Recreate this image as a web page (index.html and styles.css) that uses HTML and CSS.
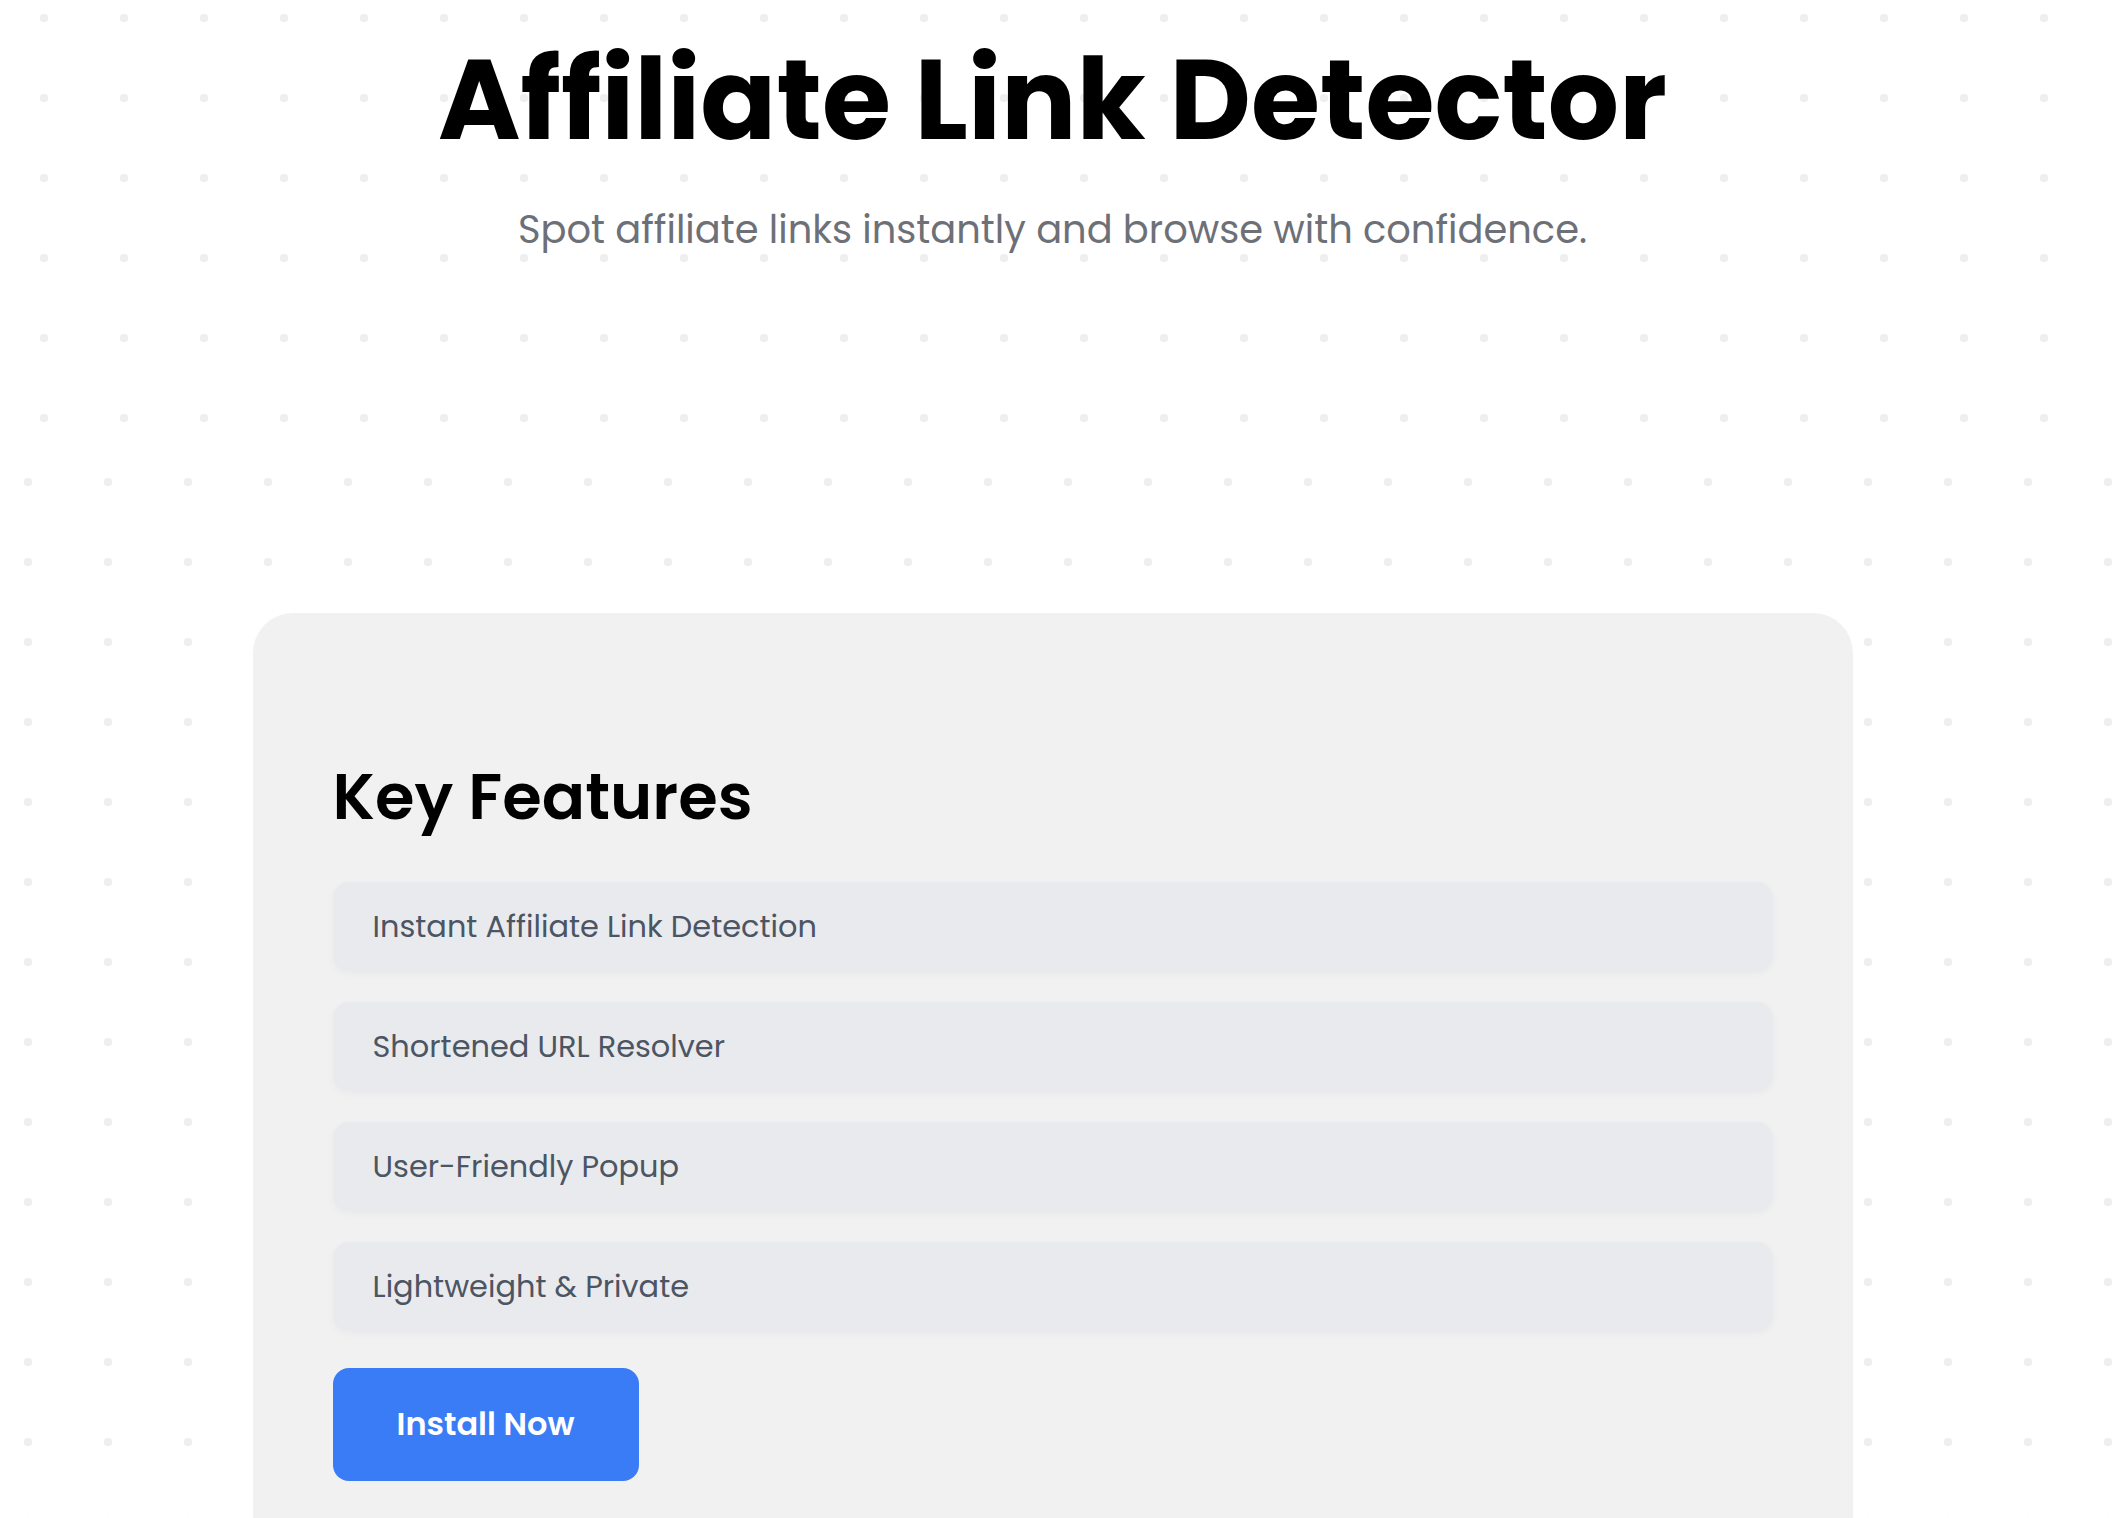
FILE: index.html
```html
<!DOCTYPE html>
<html lang="en">
<head>
<meta charset="utf-8">
<title>Affiliate Link Detector</title>
<link rel="stylesheet" href="styles.css">
</head>
<body>
<div class="page">
  <header class="hero">
    <h1 class="hero-title">Affiliate Link Detector</h1>
    <p class="hero-sub">Spot affiliate links instantly and browse with confidence.</p>
  </header>
  <main class="main">
    <section class="card">
      <h2 class="card-title">Key Features</h2>
      <ul class="features">
        <li class="feature">Instant Affiliate Link Detection</li>
        <li class="feature">Shortened URL Resolver</li>
        <li class="feature">User-Friendly Popup</li>
        <li class="feature">Lightweight &amp; Private</li>
      </ul>
      <a class="install-btn" href="#">Install Now</a>
    </section>
  </main>
</div>
</body>
</html>
```

FILE: styles.css
```css
* { box-sizing: border-box; }
html, body { margin: 0; padding: 0; }
body {
  background: #ffffff;
  font-family: Poppins, Inter, "Noto Sans", sans-serif;
  color: #000;
  overflow-x: hidden;
}
.page {
  padding-right: 7px;
  background-image: radial-gradient(circle, #efefef 4px, transparent 4.6px);
  background-size: 80px 80px;
  background-position: 4px -22px;
}
.hero {
  height: 442px;
  display: flex;
  flex-direction: column;
  align-items: center;
}
.hero-title {
  margin: 33px 0 0;
  font-size: 112px;
  font-weight: 700;
  line-height: 1.2;
}
.hero-sub {
  margin: 36px 0 0;
  font-size: 38.4px;
  font-weight: 400;
  color: #6d7077;
  line-height: 1.4;
}
.main {
  margin-right: -7px;
  padding-right: 7px;
  background: #fff;
  background-image: radial-gradient(circle, #efefef 4px, transparent 4.6px);
  background-size: 80px 80px;
  background-position: -12px 0;
  padding-top: 171px;
}
.card {
  width: 1600px;
  margin: 0 auto;
  background: #f1f1f1;
  border-radius: 40px;
  padding: 146px 80px 80px;
}
.card-title {
  margin: 0 0 46px;
  font-size: 64px;
  font-weight: 600;
  line-height: 1.2;
}
.features {
  list-style: none;
  margin: 0;
  padding: 0;
  display: flex;
  flex-direction: column;
  gap: 30px;
}
.feature {
  height: 90px;
  display: flex;
  align-items: center;
  padding: 0 40px;
  background: #e9eaed;
  border-radius: 16px;
  box-shadow: 0 2px 10px rgba(0, 0, 0, 0.03);
  font-size: 30.4px;
  color: #4b5563;
}
.install-btn {
  display: inline-flex;
  align-items: center;
  justify-content: center;
  margin-top: 36px;
  width: 306px;
  height: 113px;
  background: #3a7cf5;
  border-radius: 16px;
  color: #fff;
  font-size: 32px;
  font-weight: 600;
  text-decoration: none;
}
```
